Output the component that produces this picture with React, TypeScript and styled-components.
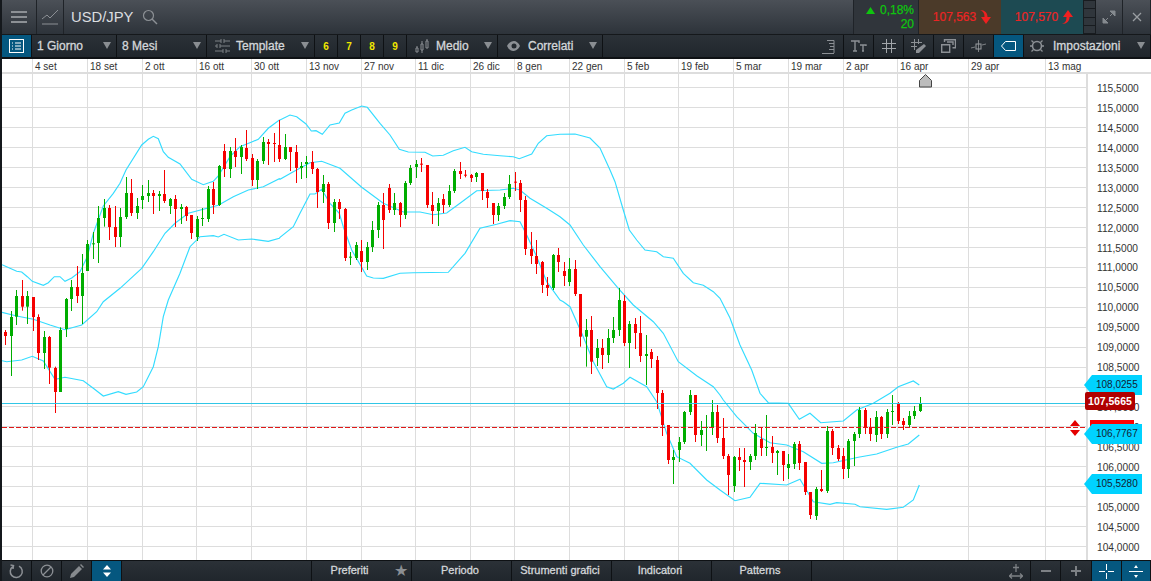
import React from "react";
import styled, { createGlobalStyle } from "styled-components";

const Global = createGlobalStyle`
  html, body { margin: 0; padding: 0; background: #14181c; }
  body { font-family: "Liberation Sans", Arial, sans-serif; overflow: hidden; }
`;

const Root = styled.div`
  width: 1151px; height: 581px; display: flex; flex-direction: column;
  padding-left: 2px; box-sizing: border-box; background: #14181c; overflow: hidden; position: relative;
`;
const Header = styled.header`
  height: 34px; display: flex; align-items: stretch; flex: none;
  background: linear-gradient(#4b5057, #2d333a);
  border-bottom: 1px solid #15181b;
`;
const HeadBtn = styled.div<{ $w: number; $bg?: string }>`
  width: ${p => p.$w}px; flex: none; display: flex; align-items: center; justify-content: center;
  border-right: 1px solid #1f2328; box-sizing: border-box; ${p => p.$bg ? `background:${p.$bg};` : ""}
`;
const Symbol = styled.div`
  color: #dcdee0; font-size: 14.8px; margin-left: 7px; display: flex; align-items: center; gap: 8px; flex: 1;
`;
const Change = styled.div`
  width: 66px; flex: none; box-sizing: border-box; padding-right: 4px; color: #0fc40f; font-size: 12px;
  -webkit-text-stroke: .25px #0fc40f; display: flex; flex-direction: column; align-items: flex-end; justify-content: center;
  line-height: 14px; background: #30353b; border-left: 1px solid #1f2328; border-right: 1px solid #1f2328;
`;
const ChangeTop = styled.div` display: flex; align-items: center; gap: 5px; `;
const Quote = styled.div<{ $bg: string }>`
  width: 82px; flex: none; background: ${p => p.$bg}; color: #ec2424; font-size: 12px; display: flex;
  align-items: center; justify-content: center; gap: 3px; -webkit-text-stroke: .2px #ec2424; padding-left: 4px; box-sizing: border-box;
`;
const Levels = styled.div`
  width: 13px; flex: none; display: flex; flex-direction: column; gap: 1px; padding: 1px; box-sizing: border-box; background: #181c20;
`;
const Level = styled.div` flex: 1; background: #30363c; `;

const Toolbar = styled.nav`
  height: 22px; display: flex; flex: none; background: linear-gradient(#2b3137, #20262c);
  border-bottom: 2px solid #0e1114; box-sizing: content-box;
`;
const ToolBtn = styled.div<{ $w: number; $active?: boolean }>`
  width: ${p => p.$w}px; flex: none; box-sizing: border-box; display: flex; align-items: center; justify-content: center;
  border-right: 1px solid #0e1114; background: ${p => p.$active ? "#05577f" : "transparent"};
`;
const Drop = styled.div<{ $w: number; $pl?: number; $gap?: number }>`
  width: ${p => p.$w}px; flex: none; box-sizing: border-box; display: flex; align-items: center; gap: ${p => p.$gap ?? 7}px;
  padding-left: ${p => p.$pl ?? 5}px; border-right: 1px solid #0e1114; position: relative;
`;
const Label = styled.span`
  color: #d4d7da; font-size: 12px; -webkit-text-stroke: .3px #d4d7da; white-space: nowrap;
`;
const Caret = styled.i`
  position: absolute; right: 5px; top: 7px; width: 0; height: 0;
  border-left: 4px solid transparent; border-right: 4px solid transparent; border-top: 7px solid #8a8e92;
`;
const Num = styled.div`
  width: 23px; flex: none; box-sizing: border-box; display: flex; align-items: center; justify-content: center;
  color: #f0e800; font-size: 10px; font-weight: bold; border-right: 1px solid #0e1114;
`;
const Spacer = styled.div` flex: 1; `;

const DateRow = styled.div`
  height: 13px; display: flex; flex: none; background: #fff; border-bottom: 2px solid #ddd;
`;
const DateCell = styled.div<{ $w: number; $first?: boolean }>`
  width: ${p => p.$w}px; flex: none; box-sizing: border-box; font-size: 10px; color: #333; line-height: 15px;
  padding-left: 2px; ${p => p.$first ? "" : "border-left: 1px solid #ddd;"}
`;

const ChartArea = styled.main`
  flex: 1; display: flex; background: #fff; position: relative; min-height: 0;
`;
const Plot = styled.svg` width: 1084px; height: 486px; display: block; flex: none; `;
const Axis = styled.div`
  flex: 1; border-left: 2px solid #ddd; padding-top: 5px; box-sizing: border-box;
`;
const Tick = styled.div`
  height: 19.94px; line-height: 20px; font-size: 10.2px; color: #333; padding-left: 9px;
`;
const PriceTag = styled.div<{ $top: number }>`
  position: absolute; left: 1090px; top: ${p => p.$top}px; width: 50px; height: 20px; background: #00d2ff;
  color: #123; font-size: 10px; line-height: 20px; padding-left: 4px; box-sizing: border-box;
  &::before {
    content: ""; position: absolute; left: -8px; top: 0; border-right: 8px solid #00d2ff;
    border-top: 10px solid transparent; border-bottom: 10px solid transparent;
  }
`;
const CurrentTag = styled.div`
  position: absolute; left: 1083px; top: 318px; width: 50px; height: 18px; background: #b00000; border-radius: 2px;
  color: #fff; font-size: 10.5px; font-weight: bold; line-height: 18px; text-align: center;
`;
const RedBox = styled.div`
  position: absolute; left: 1088px; top: 346px; width: 44px; height: 12px; background: #f00;
`;
const Diamond = styled.svg`
  position: absolute; left: 1067px; top: 346px; width: 12px; height: 16px;
`;

const Bottom = styled.footer`
  height: 20px; flex: none; display: flex; background: linear-gradient(#2b3137, #20262c); border-top: 1px solid #0e1114;
`;
const BotBtn = styled.div<{ $w: number; $active?: boolean }>`
  width: ${p => p.$w}px; flex: none; box-sizing: border-box; display: flex; align-items: center; justify-content: center;
  border-right: 1px solid #0e1114; background: ${p => p.$active ? "#05577f" : "transparent"};
`;
const BotTab = styled.div<{ $pr?: number }>`
  width: 100px; flex: none; box-sizing: border-box; display: flex; align-items: center; justify-content: center;
  border-right: 1px solid #0e1114; position: relative; padding-right: ${p => p.$pr ?? 3}px; padding-bottom: 2px;
`;
const BotLabel = styled.span`
  color: #d4d7da; font-size: 11px; -webkit-text-stroke: .3px #d4d7da; white-space: nowrap;
`;
const BotStart = styled.div` width: 190px; flex: none; border-right: 1px solid #0e1114; box-sizing: border-box; `;
const BotSpace = styled.div` width: 189px; flex: none; `;
const Star = styled.span` color: #8b8f93; font-size: 16px; line-height: 20px; position: absolute; right: 3px; top: 0; `;

const G = 1, R = 0;
const A: number[][] = [
[R,690,696,708,735],[G,633,651,708,828],[G,570,588,650,675],[R,540,588,620,632],[G,573,588,620,672],[R,591,591,651,693],[R,643,651,759,780],[G,693,711,759,807],[R,708,711,803,852],[R,800,804,876,939],[G,682,690,876,876],[G,594,597,687,711],[G,540,561,597,633],[R,498,561,588,609],[G,462,519,588,672],[G,420,432,513,513],[G,396,430,432,477],[G,318,354,429,489],[G,297,324,354,380],[R,315,324,381,420],[R,318,381,411,441],[G,324,351,411,441],[G,231,279,351,357],[R,237,279,339,348],[G,294,318,339,357],[G,255,288,300,327],[G,240,279,288,306],[R,270,279,288,342],[G,273,282,288,333],[R,210,282,303,309],[G,294,297,318,342],[R,285,297,327,381],[G,312,321,327,372],[R,318,321,348,363],[R,345,345,399,417],[G,348,357,411,423],[G,324,354,357,378],[G,258,267,357,366],[R,246,267,315,342],[G,195,198,315,318],[R,132,153,207,231],[G,141,153,207,234],[R,114,153,171,201],[G,135,141,171,222],[R,90,144,177,183],[R,162,174,240,258],[G,177,183,240,267],[G,111,126,183,192],[R,117,126,132,195],[R,99,129,132,186],[R,60,135,177,186]];
const B: number[][] = [
[G,102,141,177,180],[R,141,141,156,213],[R,135,156,204,249],[G,186,198,204,237],[G,168,186,192,234],[R,153,186,207,222],[R,204,207,276,324],[G,225,252,276,309],[R,246,252,369,387],[G,297,306,369,396],[R,297,306,327,357],[R,324,327,474,483],[G,456,470,472,495],[G,426,435,474,480],[R,420,453,486,516],[G,426,441,486,510],[G,363,390,441,456],[G,306,315,390,414],[R,279,315,360,447],[R,252,264,330,339],[G,279,309,330,345],[R,306,309,345,381],[G,243,249,345,357],[G,195,204,249,255],[G,180,192,201,234],[R,174,191,193,216],[R,195,195,315,324],[R,276,315,333,372],[G,294,309,333,378],[R,282,297,315,339],[G,255,273,315,321],[G,207,213,273,279],[R,186,213,222,237],[R,210,224,226,232],[R,222,225,234,246],[G,216,219,231,246],[R,219,219,273,300],[R,267,276,294,324],[R,309,309,345,372],[G,309,318,345,363],[G,279,291,318,327],[G,225,252,291,297],[R,216,245,247,273],[R,240,249,300,336],[R,288,300,447,465],[R,396,447,468,492],[R,420,468,492,522],[R,483,486,555,579],[R,531,555,564,588],[G,462,465,564,570],[R,444,465,486,516]];
const D: number[][] = [
[R,276,303,318,348],[G,264,297,336,348],[R,270,297,372,378],[R,372,372,500,530],[G,447,480,500,590],[R,438,480,575,612],[G,507,534,564,588],[R,507,534,555,597],[G,477,504,555,579],[G,441,480,504,519],[G,354,390,480,498],[R,375,393,519,528],[G,453,462,519,594],[R,444,462,489,537],[R,438,489,558,576],[G,495,552,558,645],[R,537,546,567,594],[R,558,570,669,717],[R,660,669,765,798],[R,765,765,870,882],[G,840,861,870,942],[G,801,816,840,876],[G,723,726,816,822],[G,660,675,726,735],[R,675,675,795,816],[G,753,780,795,828],[G,735,771,774,843],[G,690,726,771,795],[R,705,726,804,819]];
const E: number[][] = [
[R,144,204,258,267],[R,252,258,315,375],[G,258,261,348,366],[R,234,261,270,303],[R,234,270,276,351],[G,252,258,276,300],[G,162,189,258,270],[R,171,207,234,258],[G,135,231,233,258],[R,198,231,249,279],[G,240,243,249,315],[R,243,243,285,333],[G,252,282,294,327],[G,216,222,282,297],[R,213,222,279,300],[R,276,276,366,375],[R,366,366,435,447],[G,351,357,438,450],[R,300,357,363,366],[G,168,183,363,369],[R,177,183,234,255],[R,225,234,267,273],[R,234,258,297,327],[G,207,213,297,324],[G,186,192,213,288],[G,111,120,192,204],[R,114,120,174,192],[R,144,171,192,213],[G,123,141,195,216],[R,138,141,192,207],[G,117,126,192,204],[G,75,123,125,165],[R,96,102,153,162],[R,144,153,165,180],[G,123,138,165,174],[G,108,123,138,147],[G,81,102,123,126]];

const candles = [
  ...A.map(c => ({ c, y0: 100 })), ...B.map(c => ({ c, y0: 100 })),
  ...D.map(c => ({ c, y0: 170 })), ...E.map(c => ({ c, y0: 370 })),
].map(({ c, y0 }, i) => ({
  x: Math.round(5.33 + 5.475 * i) + 0.5, green: c[0] === 1,
  hi: y0 + c[1] / 3, top: y0 + c[2] / 3, bot: y0 + c[3] / 3, lo: y0 + c[4] / 3,
}));

type Seg = [number, number, number[]];
const path = (segs: Seg[]) => {
  let last = -1; const out: string[] = [];
  segs.forEach(([ox, oy, a]) => {
    for (let i = 0; i < a.length; i += 2) {
      const x = ox + a[i] / 3, y = oy + a[i + 1] / 3;
      if (x > last) { out.push(`${x.toFixed(1)},${y.toFixed(1)}`); last = x; }
    }
  });
  return out.join(" ");
};
const upper = path([
  [0,100,[6,494,30,505,50,514,65,516,82,530,97,544,130,556,145,548,163,530,180,530,195,544,215,534,240,515,262,470,280,400,310,318,340,280,360,250,378,210,425,135,445,118,460,109,475,116,490,155,505,172,540,192,575,238,610,254,640,244,655,228,690,170,720,140,755,126,775,118,805,85,838,60]],
  [280,100,[0,60,30,45,50,50,78,72,94,93,108,92,127,103,150,75,178,69,195,40,215,30,245,18,262,22,300,70,330,105,358,148,385,156,435,157,458,168,490,166,520,152,555,142,575,155,610,163,660,167,700,170,718,176,755,162,775,130,800,107,840,103]],
  [0,0,[1725,402,1770,414,1800,444]],
  [500,170,[330,0,345,35,370,120,388,180,410,210,435,240,470,245,490,260,520,265,550,310,580,338,610,346,640,365,660,385]],
  [700,370,[90,-156,120,-75,155,0,180,70,205,98,265,100,298,148,330,130,362,158,430,153,470,120,520,100,570,70,595,50,640,33,658,45]],
]);
const middle = path([
  [0,100,[6,637,50,648,100,658,150,675,195,689,245,675,290,635,310,605,360,565,425,505,460,455,495,400,525,370,565,340,610,328,655,316,700,290,745,270,790,260,838,236]],
  [280,100,[0,238,40,215,90,188,125,184,180,205,245,262,310,310,370,336,420,336,460,344,500,339,540,310,590,272,660,270,700,265,720,270,750,295,800,325,840,350]],
  [500,170,[210,165,250,225,300,290,355,355,400,405,460,455,490,490,535,575,590,617,640,650,660,675]],
  [700,370,[40,55,70,90,110,140,160,190,210,218,260,225,310,245,365,280,400,278,475,262,530,252,590,232,625,222,658,195]],
]);
const lower = path([
  [0,100,[6,782,20,785,65,780,97,769,130,783,165,838,195,832,250,842,280,865,310,888,355,875,378,883,410,876,430,860,460,800,475,740,490,650,505,600,540,520,570,440,600,410,640,407,655,411,672,403,715,420,755,417,805,424,838,415]],
  [280,100,[0,412,40,380,60,340,90,282,105,282,125,268,150,310,178,340,190,380,215,450,260,528,280,534,310,535,360,520,400,518,505,517,555,460,600,385,650,373,690,362,720,365,740,405,770,470,800,545,840,600]],
  [500,170,[190,395,210,410,250,500,280,575,320,650,340,657,370,640,390,622,440,650,470,695,500,790,530,860,570,880,620,930,660,960]],
  [700,370,[60,370,105,392,150,382,180,340,260,345,300,328,340,395,390,403,410,398,465,403,480,410,560,418,610,412,640,390,658,345]],
]);

const vGrid = [32.5,87.5,142.5,196.5,251.5,306.5,361.5,415.5,470.5,514.5,569.5,624.5,678.5,733.5,788.5,843.5,897.5,968.5,1045.5];
const dates = ["4 set","18 set","2 ott","16 ott","30 ott","13 nov","27 nov","11 dic","26 dic","8 gen","22 gen","5 feb","19 feb","5 mar","19 mar","2 apr","16 apr","29 apr","13 mag"];
const ticks = Array.from({ length: 24 }, (_, i) => (115.5 - i * 0.5).toFixed(4).replace(".", ","));

const Stroke = { fill: "none", stroke: "#8c9095", strokeWidth: 1.4 } as const;

export default function App() {
  return (
    <Root>
      <Global />
      <Header>
        <HeadBtn $w={35}>
          <svg width="18" height="14" viewBox="0 0 18 14"><path d="M1 2h16M1 7h16M1 12h16" stroke="#8c9095" strokeWidth="2" /></svg>
        </HeadBtn>
        <HeadBtn $w={27}>
          <svg width="18" height="18" viewBox="0 0 18 18"><path d="M1 11l5-4 3 3 8-8M1 16h16" {...Stroke} strokeWidth={1} /></svg>
        </HeadBtn>
        <Symbol>
          USD/JPY
          <svg width="16" height="16" viewBox="0 0 16 16"><circle cx="6.5" cy="6.5" r="5" {...Stroke} strokeWidth={1.2} /><path d="M10 10l5 5" {...Stroke} /></svg>
        </Symbol>
        <Change>
          <ChangeTop>
            <svg width="9" height="7" viewBox="0 0 9 7"><path d="M4.5 0L9 7H0z" fill="#0fc40f" /></svg>
            0,18%
          </ChangeTop>
          <div>20</div>
        </Change>
        <Quote $bg="#4b3a29">
          107,563
          <svg width="12" height="16" viewBox="0 0 12 16"><path d="M1 1c3 1 4.500 3 4.500 7H2l5 7 5-7H8.500C8.500 4 6 1 1 1z" fill="#ee2020" /></svg>
        </Quote>
        <Quote $bg="#1d4a52">
          107,570
          <svg width="12" height="16" viewBox="0 0 12 16"><path d="M1 15c3-1 4.500-3 4.500-7H2l5-7 5 7H8.500C8.500 12 6 15 1 15z" fill="#ee2020" /></svg>
        </Quote>
        <Levels><Level /><Level /><Level /><Level /></Levels>
        <HeadBtn $w={27}>
          <svg width="14" height="14" viewBox="0 0 14 14"><path d="M8 1h5v5zM1 13V8l5 5zM10 4L8 6M4 10l2-2" fill="#858a8f" stroke="#858a8f" /></svg>
        </HeadBtn>
        <HeadBtn $w={28}>
          <svg width="10" height="10" viewBox="0 0 10 10"><path d="M1 1l8 8M9 1l-8 8" stroke="#9a9ea2" strokeWidth="1.3" /></svg>
        </HeadBtn>
      </Header>

      <Toolbar>
        <ToolBtn $w={30} $active>
          <svg width="15" height="14" viewBox="0 0 15 14"><rect x=".5" y=".5" width="14" height="13" fill="none" stroke="#fff" /><path d="M3 4h1M6 4h6M3 7h1M6 7h6M3 10h1M6 10h6" stroke="#fff" /></svg>
        </ToolBtn>
        <Drop $w={85} $pl={5}><Label>1 Giorno</Label><Caret /></Drop>
        <Drop $w={90}><Label>8 Mesi</Label><Caret /></Drop>
        <Drop $w={108} $pl={8} $gap={6}>
          <svg width="15" height="14" viewBox="0 0 15 14"><path d="M0 2h6M9 2h6M0 7h2M5 7h10M0 12h8M11 12h4M6 0v4M9 0v4M2 5v4M5 5v4M8 10v4M11 10v4" stroke="#7d8185" /></svg>
          <Label>Template</Label><Caret />
        </Drop>
        <Num>6</Num><Num>7</Num><Num>8</Num><Num>9</Num>
        <Drop $w={91} $pl={7}>
          <svg width="15" height="14" viewBox="0 0 15 14"><path d="M2 13V9h2v4zM7 11V5h2v6zM12 9V2h2v7zM3 9V7M8 5V2M13 2V0M8 11v3" fill="none" stroke="#8c9095" /></svg>
          <Label>Medio</Label><Caret />
        </Drop>
        <Drop $w={105} $pl={8}>
          <svg width="15" height="12" viewBox="0 0 15 12"><path d="M1 6c2-4 5-5 7-5s5 2 6 5c-2 4-5 5-7 5S3 10 1 6z" fill="#8c9095" /><circle cx="8" cy="6" r="2.500" fill="#23292f" /></svg>
          <Label>Correlati</Label><Caret />
        </Drop>
        <Spacer />
        <ToolBtn $w={30}><svg width="15" height="15" viewBox="0 0 15 15"><path d="M1 14.500h12M6 1.500h7V14M8 4.500h5M9 7.500h4M8 10.500h5" {...Stroke} strokeWidth={1} /></svg></ToolBtn>
        <ToolBtn $w={30}><svg width="16" height="12" viewBox="0 0 16 12"><path d="M0 1h8v2M4 1v10M2 11h4M9 5h6v1M12 5v6M11 11h2" {...Stroke} /></svg></ToolBtn>
        <ToolBtn $w={30}><svg width="14" height="14" viewBox="0 0 14 14"><path d="M4.500 0v14M9.500 0v14M0 4.500h14M0 9.500h14" stroke="#a2a6aa" /></svg></ToolBtn>
        <ToolBtn $w={30}><svg width="16" height="15" viewBox="0 0 16 15"><path d="M3.500 0v11M7.500 0v5M0 3.500h11M0 7.500h6" stroke="#8c9095" /><path d="M13 5l2 2-7 7-3 0 0-3z" fill="#8c9095" /></svg></ToolBtn>
        <ToolBtn $w={30}><svg width="15" height="14" viewBox="0 0 15 14"><path d="M.7 5.700h8v7.600h-8zM3.500 3V.7h11v8h-3M6 3h6v3" {...Stroke} /></svg></ToolBtn>
        <ToolBtn $w={30}><svg width="15" height="14" viewBox="0 0 15 14"><path d="M0 9l4-1M11 6l4-1M7.500 1v12" stroke="#7d8185" /><rect x="5" y="5" width="5" height="5" fill="none" stroke="#9a9ea2" /></svg></ToolBtn>
        <ToolBtn $w={30} $active><svg width="15" height="10" viewBox="0 0 15 10"><path d="M14.500.5h-10L.5 5l4 4.500h10z" fill="none" stroke="#fff" /></svg></ToolBtn>
        <Drop $w={127} $pl={6} $gap={9}>
          <svg width="14" height="14" viewBox="0 0 14 14"><circle cx="7" cy="7" r="4.500" fill="none" stroke="#8c9095" strokeWidth="1.600" /><path d="M3.500 3.500L1.500 1.500M10.500 3.500l2-2M3.500 10.500l-2 2M10.500 10.500l2 2M0 7h2M12 7h2" stroke="#8c9095" strokeWidth="1.300" /></svg>
          <Label>Impostazioni</Label><Caret />
        </Drop>
      </Toolbar>

      <DateRow>
        <DateCell $w={30} $first />
        {dates.map((d, i) => (
          <DateCell key={d} $w={(i + 1 < vGrid.length ? vGrid[i + 1] : 1149.5) - vGrid[i]}>{d}</DateCell>
        ))}
      </DateRow>

      <ChartArea>
        <Plot viewBox="2 74 1084 486">
          {vGrid.map(x => <line key={x} x1={x} x2={x} y1={74} y2={561} stroke="#ddd" />)}
          {ticks.map((_, i) => {
            const y = Math.round(87.4 + i * 19.94) + 0.5;
            return <line key={i} x1={2} x2={1086} y1={y} y2={y} stroke="#ddd" />;
          })}
          <polyline points={upper} fill="none" stroke="#33dcff" strokeWidth="1.150" />
          <polyline points={middle} fill="none" stroke="#33dcff" strokeWidth="1.150" />
          <polyline points={lower} fill="none" stroke="#33dcff" strokeWidth="1.150" />
          {candles.map((c, i) => {
            const col = c.green ? "#00ad00" : "#f50000";
            return (
              <g key={i}>
                <line x1={c.x} x2={c.x} y1={c.hi} y2={c.lo} stroke={col} />
                <rect x={c.x - 1.5} y={c.top} width={3} height={Math.max(c.bot - c.top, 1)} fill={col} />
              </g>
            );
          })}
          <line x1={2} x2={1086} y1={403.5} y2={403.5} stroke="#30c6e6" />
          <line x1={2} x2={1086} y1={427.5} y2={427.5} stroke="#e01818" strokeDasharray="5 2" />
          <path d="M919.500 87V80.500L925.500 74.500L931.500 80.500V87Z" fill="#bcbcbc" stroke="#444" />
        </Plot>
        <Axis>
          {ticks.map(t => <Tick key={t}>{t}</Tick>)}
        </Axis>
        <PriceTag $top={301}>108,0255</PriceTag>
        <CurrentTag>107,5665</CurrentTag>
        <RedBox />
        <PriceTag $top={350}>106,7767</PriceTag>
        <PriceTag $top={400}>105,5280</PriceTag>
        <Diamond viewBox="0 0 12 16"><path d="M6 0l5 6H1zM6 16l5-6H1z" fill="#e40000" /></Diamond>
      </ChartArea>

      <Bottom>
        <BotBtn $w={30}><svg width="15" height="15" viewBox="0 0 15 15"><path d="M4 2.500a6 6 0 1 0 6-.3M1.500 1l3 .5-.5 3.500" {...Stroke} strokeWidth={1.500} /></svg></BotBtn>
        <BotBtn $w={30}><svg width="14" height="14" viewBox="0 0 14 14"><circle cx="7" cy="7" r="5.800" {...Stroke} strokeWidth={1.300} /><path d="M3 11l8-8" {...Stroke} strokeWidth={1.300} /></svg></BotBtn>
        <BotBtn $w={30}><svg width="14" height="14" viewBox="0 0 14 14"><path d="M0 14l1-4 8-8 3 3-8 8zM10 1l1-1 3 3-1 1z" fill="#868a8e" /></svg></BotBtn>
        <BotBtn $w={30} $active><svg width="10" height="12" viewBox="0 0 10 12"><path d="M5 0l4 4.500H1zM5 12l4-4.500H1z" fill="#fff" /></svg></BotBtn>
        <BotStart />
        <BotTab $pr={24}><BotLabel>Preferiti</BotLabel><Star>★</Star></BotTab>
        <BotTab><BotLabel>Periodo</BotLabel></BotTab>
        <BotTab><BotLabel>Strumenti grafici</BotLabel></BotTab>
        <BotTab><BotLabel>Indicatori</BotLabel></BotTab>
        <BotTab><BotLabel>Patterns</BotLabel></BotTab>
        <BotSpace />
        <BotBtn $w={30}><svg width="14" height="15" viewBox="0 0 14 15"><path d="M7 0v8M4 3.500h6M0 12h14M3 9.500L.5 12 3 14.500M11 9.500l2.500 2.500-2.500 2.500" stroke="#7d8185" strokeWidth="1.300" fill="none" /></svg></BotBtn>
        <BotBtn $w={30}><svg width="10" height="10" viewBox="0 0 10 10"><path d="M0 5h10" stroke="#7d8185" strokeWidth="2" /></svg></BotBtn>
        <BotBtn $w={31}><svg width="10" height="10" viewBox="0 0 10 10"><path d="M0 5h10M5 0v10" stroke="#7d8185" strokeWidth="2" /></svg></BotBtn>
        <BotBtn $w={30} $active><svg width="15" height="15" viewBox="0 0 15 15"><path d="M0 7.500h6M9 7.500h6M7.500 0v6M7.500 9v6" stroke="#fff" /></svg></BotBtn>
        <BotBtn $w={29} $active><svg width="14" height="15" viewBox="0 0 14 15"><path d="M0 7.500h14" stroke="#fff" /><path d="M7 1l2 3H5zM7 14l2-3H5z" fill="#fff" /></svg></BotBtn>
      </Bottom>
    </Root>
  );
}
